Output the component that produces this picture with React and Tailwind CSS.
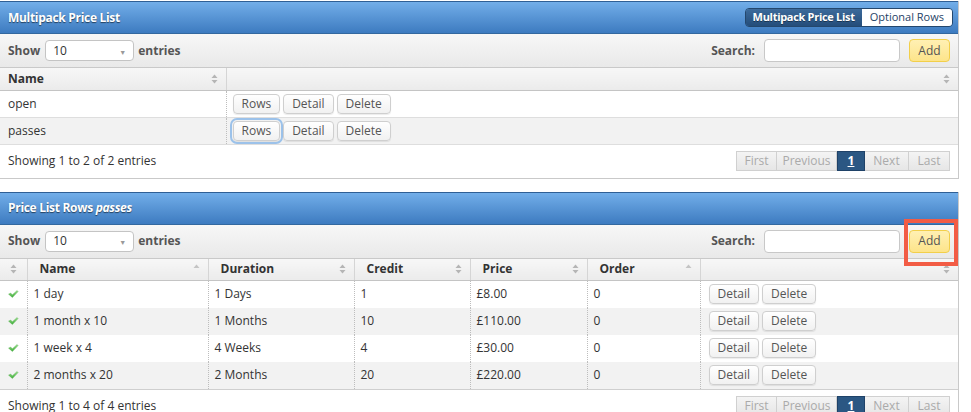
import React from "react";

const font = { fontFamily: '"Open Sans", "Liberation Sans", sans-serif' };

function SortIcon({ dir }) {
  return (
    <svg width="7" height="10" viewBox="0 0 7 10" className="inline-block">
      {dir !== "desc" && <path d="M3.5 0.5 L6.5 4 L0.5 4 Z" fill={dir === "asc" ? "#c4c4c4" : "#b5b5b5"} />}
      {!dir && <path d="M3.5 9.5 L6.5 6 L0.5 6 Z" fill="#b5b5b5" />}
    </svg>
  );
}

function Check() {
  return (
    <svg width="15" height="12" viewBox="0 0 15 12">
      <defs>
        <linearGradient id="ck" x1="0" y1="0" x2="0" y2="1">
          <stop offset="0" stopColor="#9be08f" />
          <stop offset="1" stopColor="#3fae3a" />
        </linearGradient>
      </defs>
      <path d="M0.8 6.2 L3.8 4.6 L6.2 7.2 L13 1 L14.4 2.6 L6.3 11 Z" fill="url(#ck)" stroke="#4aa544" strokeWidth="0.5" strokeLinejoin="round" />
    </svg>
  );
}

function Btn({ children, focus }) {
  return (
    <button
      className={
        "h-[20px] px-[8px] rounded-[4px] border border-[#cfcfcf] bg-gradient-to-b from-white to-[#f1f1f1] text-[12px] text-[#555] leading-none shadow-[0_1px_1px_rgba(0,0,0,0.08)] " +
        (focus ? "outline outline-2 outline-[#9cc2ea] outline-offset-[1px]" : "")
      }
    >
      {children}
    </button>
  );
}

function Header({ children, right }) {
  return (
    <div className="h-[33px] flex items-center justify-between px-2 border-t border-[#2f5f95] bg-gradient-to-b from-[#72aee9] to-[#3d7bc0] border-b border-b-[#33689f]">
      <div className="text-white text-[12px] font-bold tracking-[-0.3px] [text-shadow:0_1px_1px_rgba(0,0,0,0.55)]">{children}</div>
      {right}
    </div>
  );
}

function Toolbar() {
  return (
    <div className="h-[34px] flex items-center px-2 bg-gradient-to-b from-[#f7f7f7] to-[#e9e9e9] border-b border-[#c9c9c9]">
      <span className="text-[12px] font-bold text-[#555]">Show</span>
      <div className="ml-[5px] w-[89px] h-[21px] rounded-[4px] border border-[#c4c4c4] bg-white flex items-center justify-between px-[7px] text-[12px] text-[#333]">
        <span>10</span>
        <span className="text-[#999] text-[7px] mt-[5px]">▼</span>
      </div>
      <span className="ml-[4px] text-[12px] font-bold text-[#555]">entries</span>
      <div className="ml-auto flex items-center">
        <span className="text-[12px] font-bold text-[#555]">Search:</span>
        <div className="ml-[9px] w-[136px] h-[23px] rounded-[4px] border border-[#c8c8c8] bg-white" />
        <button className="ml-[9px] w-[41px] h-[23px] rounded-[4px] border border-[#f2cf4a] bg-gradient-to-b from-[#fff0b3] to-[#fde48a] text-[12px] text-[#555]">Add</button>
      </div>
    </div>
  );
}

function Pager() {
  const base = "h-[20px] border border-[#d0d0d0] bg-gradient-to-b from-[#f4f4f4] to-[#e6e6e6] text-[12px] text-[#aaa] flex items-center justify-center";
  return (
    <div className="flex">
      <div className={base + " w-[41px]"}>First</div>
      <div className={base + " w-[60px] border-l-0"}>Previous</div>
      <div className="h-[20px] w-[28px] bg-[#2b5783] border border-[#1f4268] text-white text-[12px] font-bold flex items-center justify-center underline">1</div>
      <div className={base + " w-[44px] border-l-0"}>Next</div>
      <div className={base + " w-[41px] border-l-0"}>Last</div>
    </div>
  );
}

function Footer({ text }) {
  return (
    <div className="h-[33px] flex items-center justify-between pl-2 pr-[8px] bg-white">
      <span className="text-[12px] text-[#333]">{text}</span>
      <Pager />
    </div>
  );
}

const th = "h-[22px] text-left text-[12px] font-bold text-[#333] px-2 border-r border-[#d5d5d5] bg-gradient-to-b from-[#f7f7f7] to-[#ebebeb] border-b border-b-[#c4c4c4]";
const td = "h-[27px] px-2 text-[12px] text-[#333] border-r border-dotted border-r-[#bdbdbd]";

export default function App() {
  const rows = [
    ["1 day", "1 Days", "1", "£8.00", "0"],
    ["1 month x 10", "1 Months", "10", "£110.00", "0"],
    ["1 week x 4", "4 Weeks", "4", "£30.00", "0"],
    ["2 months x 20", "2 Months", "20", "£220.00", "0"],
  ];
  return (
    <div style={font} className="w-[971px] h-[412px] bg-white overflow-hidden pt-[1px]">
      {/* Panel 1 */}
      <div className="w-[959px] border-r border-b border-[#c9c9c9]">
        <Header
          right={
            <div className="flex h-[19px] rounded-[4px] overflow-hidden border border-[#24476d] mr-[-3px]">
              <div className="px-[7px] flex items-center bg-gradient-to-b from-[#3c6a9b] to-[#244d7a] text-white text-[11px] font-bold tracking-[-0.3px] [text-shadow:0_1px_0_rgba(0,0,0,0.4)]">Multipack Price List</div>
              <div className="px-[8px] flex items-center bg-white text-[#1f3f66] text-[11px]">Optional Rows</div>
            </div>
          }
        >
          Multipack Price List
        </Header>
        <Toolbar />
        <table className="w-full border-collapse table-fixed">
          <thead>
            <tr>
              <th className={th + " w-[226px]"}>
                <div className="flex items-center justify-between">Name<SortIcon /></div>
              </th>
              <th className={th + " border-r-0"}>
                <div className="flex items-center justify-end"><SortIcon /></div>
              </th>
            </tr>
          </thead>
          <tbody>
            {[["open", false], ["passes", true]].map(([n, f], i) => (
              <tr key={n} className={(i % 2 ? "bg-[#f2f2f2]" : "bg-white") + " border-b border-[#dedede]"}>
                <td className={td}>{n}</td>
                <td className="h-[27px] px-[6px]">
                  <div className="flex gap-[3px]">
                    <Btn focus={f}>Rows</Btn>
                    <Btn>Detail</Btn>
                    <Btn>Delete</Btn>
                  </div>
                </td>
              </tr>
            ))}
          </tbody>
        </table>
        <Footer text="Showing 1 to 2 of 2 entries" />
      </div>

      <div className="h-[13px]" />

      {/* Panel 2 */}
      <div className="w-[959px] border-r border-[#c9c9c9] relative">
        <Header>
          Price List Rows <i className="font-bold">passes</i>
        </Header>
        <Toolbar />
        <div className="absolute left-[904px] top-[27px] w-[54px] h-[47px] border-[4px] border-[#f25c45]" />
        <table className="w-full border-collapse table-fixed">
          <thead>
            <tr>
              <th className={th + " w-[27px]"}><div className="flex justify-center"><SortIcon /></div></th>
              <th className={th + " w-[181px] pl-[12px]"}><div className="flex items-center justify-between">Name<SortIcon dir="asc" /></div></th>
              <th className={th + " w-[146px] pl-[12px]"}><div className="flex items-center justify-between">Duration<SortIcon /></div></th>
              <th className={th + " w-[116px] pl-[12px]"}><div className="flex items-center justify-between">Credit<SortIcon /></div></th>
              <th className={th + " w-[117px] pl-[12px]"}><div className="flex items-center justify-between">Price<SortIcon /></div></th>
              <th className={th + " w-[113px] pl-[12px]"}><div className="flex items-center justify-between">Order<SortIcon dir="asc" /></div></th>
              <th className={th + " border-r-0"}><div className="flex justify-end"><SortIcon /></div></th>
            </tr>
          </thead>
          <tbody>
            {rows.map((r, i) => (
              <tr key={r[0]} className={i % 2 ? "bg-[#f2f2f2]" : "bg-white"}>
                <td className={td + " px-0"}><div className="flex justify-center"><Check /></div></td>
                {r.map((c, j) => (
                  <td key={j} className={td + " pl-[6px]"}>{c}</td>
                ))}
                <td className="h-[27px] px-[8px]">
                  <div className="flex gap-[3px]">
                    <Btn>Detail</Btn>
                    <Btn>Delete</Btn>
                  </div>
                </td>
              </tr>
            ))}
          </tbody>
        </table>
        <div className="border-t border-[#cfcfcf]">
          <Footer text="Showing 1 to 4 of 4 entries" />
        </div>
      </div>
    </div>
  );
}
